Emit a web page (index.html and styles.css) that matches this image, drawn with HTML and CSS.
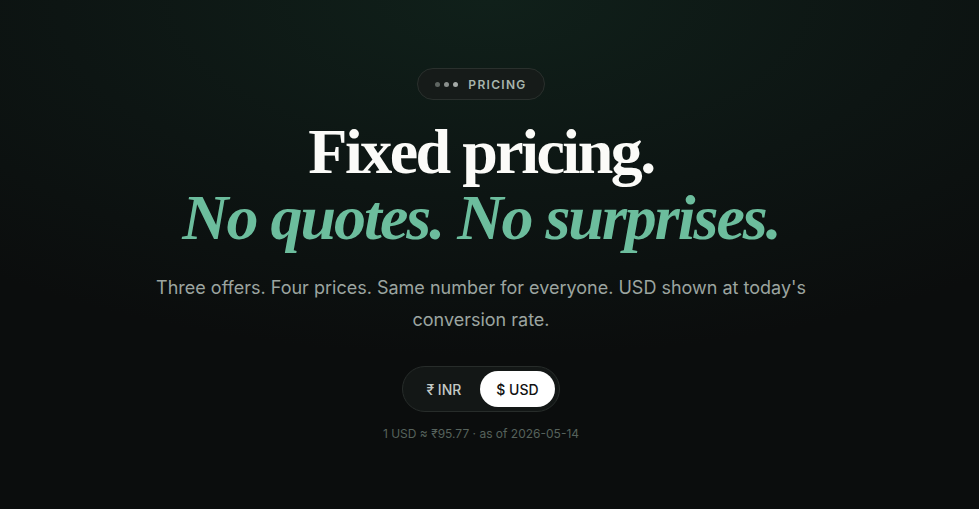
FILE: index.html
```html
<!DOCTYPE html>
<html lang="en">
<head>
    <meta charset="UTF-8">
    <meta name="viewport" content="width=device-width, initial-scale=1.0">
    <title>Pricing</title>
    <link rel="stylesheet" href="styles.css">
</head>
<body>

    <section class="hero">

        <div class="tag">
            <span class="dots">
                <i class="d1"></i><i class="d2"></i><i class="d3"></i>
            </span>
            PRICING
        </div>

        <h1 class="titulo">
            <span class="linha1">Fixed pricing.</span>
            <span class="linha2">No quotes. No surprises.</span>
        </h1>

        <p class="sub">Three offers. Four prices. Same number for everyone. USD shown at today's conversion rate.</p>

        <div class="toggle">
            <button class="opt">₹ INR</button>
            <button class="opt ativo">$ USD</button>
        </div>

        <div class="taxa">1 USD ≈ ₹95.77 · as of 2026-05-14</div>

    </section>

</body>
</html>
```

FILE: styles.css
```css
html, body{
    margin: 0;
    height: 100%;
}

body{
    font-family: Inter, "Noto Sans", sans-serif;
    background: radial-gradient(ellipse 80% 70% at 50% 0%, #10201a 0%, #0d1513 55%, #0b0d0d 100%);
    background-color: #0b0d0d;
    color: #fff;
}

.hero{
    display: flex;
    flex-direction: column;
    align-items: center;
    padding: 68px 17px 0 0;
}

.tag{
    display: flex;
    align-items: center;
    gap: 10px;
    height: 30px;
    padding: 0 17px 0 17px;
    border: solid 1px #2a302d;
    border-radius: 999px;
    background-color: #161b19;
    font-size: 12px;
    font-weight: 600;
    letter-spacing: 1.3px;
    color: #a7b5ad;
}
.dots{
    display: flex;
    gap: 4px;
}
.dots i{
    width: 5px;
    height: 5px;
    border-radius: 50%;
    background-color: #8a908d;
}
.dots .d1{ background-color: #5f6662; }
.dots .d3{ background-color: #a4aaa7; }

.titulo{
    margin: 19px 0 0;
    font-family: "Liberation Serif", "DejaVu Serif", serif;
    font-weight: 700;
    font-size: 64px;
    line-height: 66px;
    letter-spacing: -2.5px;
    text-align: center;
}
.titulo span{
    display: block;
}
.linha1{
    color: #fbfbf8;
}
.linha2{
    font-style: italic;
    letter-spacing: -2px;
    color: #6cbd9d;
}

.sub{
    margin: 21px 0 0;
    max-width: 680px;
    font-size: 18px;
    line-height: 32px;
    color: #9ca5a0;
    text-align: center;
}

.toggle{
    display: flex;
    margin-top: 30px;
    padding: 4px;
    border: solid 1px #272c2a;
    border-radius: 999px;
    background-color: #131716;
}
.opt{
    border: none;
    border-radius: 999px;
    background: none;
    cursor: pointer;
    height: 36px;
    padding: 0 19px;
    font-family: Inter, sans-serif;
    font-size: 14px;
    font-weight: 500;
    color: #c3cac6;
}
.opt.ativo{
    background-color: #fff;
    color: #111;
    padding: 0 16px;
}

.taxa{
    margin-top: 14px;
    font-size: 12px;
    color: #56625c;
}
```
